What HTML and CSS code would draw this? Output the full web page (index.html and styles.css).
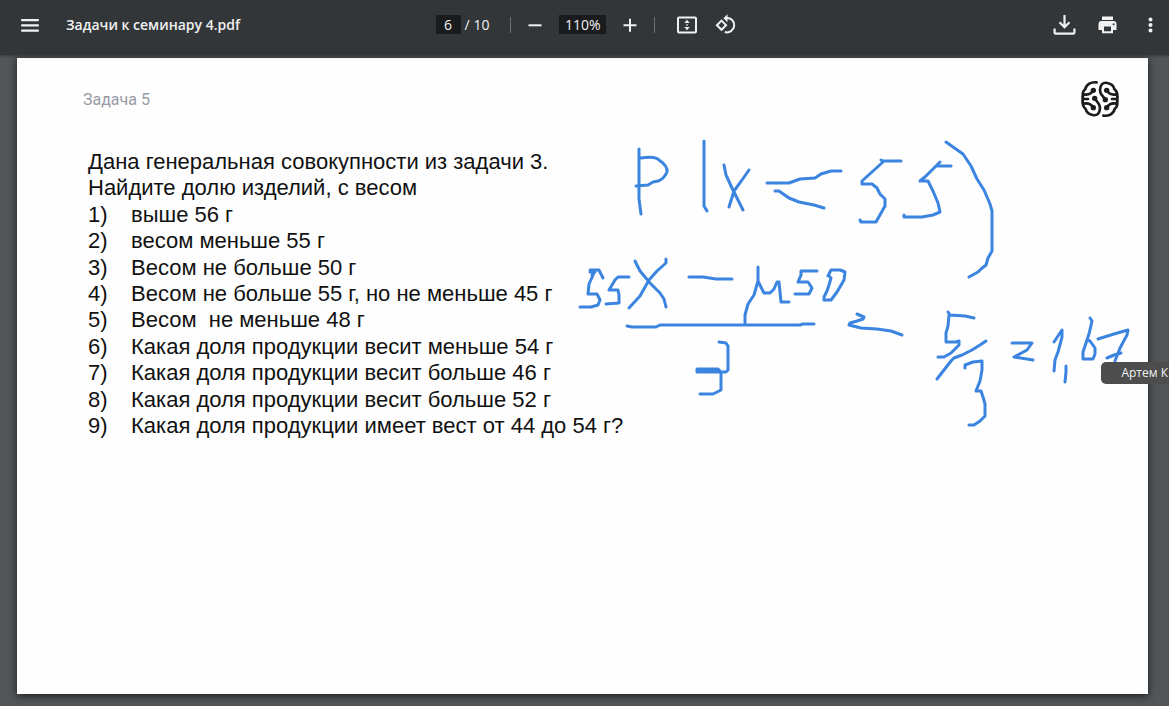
FILE: index.html
```html
<!DOCTYPE html>
<html lang="ru">
<head>
<meta charset="utf-8">
<meta name="viewport" content="width=device-width, initial-scale=1">
<title>Задачи к семинару 4.pdf</title>
<link rel="stylesheet" href="styles.css">
</head>
<body>
<header class="toolbar">
  <div class="toolbar-start">
    <button class="icon-button" type="button" aria-label="Меню">
      <svg viewBox="0 0 24 24" class="icon"><path d="M3.2 6h17.6v2.2H3.2zM3.2 11.2h17.6v2.2H3.2zM3.2 16.6h17.6v2.2H3.2z"/></svg>
    </button>
    <h1 class="file-name">Задачи к семинару 4.pdf</h1>
  </div>
  <div class="toolbar-center">
    <div class="pages">
      <input class="field page-field" type="text" value="6" aria-label="Номер страницы">
      <span class="page-total">/ 10</span>
    </div>
    <span class="divider"></span>
    <div class="zoom">
      <button class="icon-button" type="button" aria-label="Уменьшить">
        <svg viewBox="0 0 24 24" class="icon"><path d="M5.5 11.3h13v2h-13z"/></svg>
      </button>
      <input class="field zoom-field" type="text" value="110%" aria-label="Масштаб">
      <button class="icon-button" type="button" aria-label="Увеличить">
        <svg viewBox="0 0 24 24" class="icon"><path d="M5.500 11.300H11V5.800h2v5.500h5.500v2H13v5.500h-2v-5.500H5.500z"/></svg>
      </button>
    </div>
    <span class="divider"></span>
    <div class="view">
      <button class="icon-button" type="button" aria-label="По размеру страницы">
        <svg viewBox="0 0 24 24" class="icon"><rect x="3" y="4.500" width="18" height="15" rx="1" fill="none" stroke="currentColor" stroke-width="2"/><path d="M12 6.700l2.700 3.300H9.300zM12 17.300l2.700-3.300H9.300zM11.300 11.200h1.400v1.600h-1.400z"/></svg>
      </button>
      <button class="icon-button" type="button" aria-label="Повернуть">
        <svg viewBox="0 0 24 24" class="icon"><g fill="none" stroke="currentColor" stroke-width="2"><path d="M7.500 7.600L12.100 12.200 7.500 16.800 2.900 12.200z"/><path d="M12.300 5A7.200 7.200 0 1 1 10.800 19"/></g><path d="M13.500 1.200v8L9.400 5.200z"/></svg>
      </button>
    </div>
  </div>
  <div class="toolbar-end">
    <button class="icon-button" type="button" aria-label="Скачать">
      <svg viewBox="0 0 24 24" class="icon"><g fill="none" stroke="currentColor" stroke-width="2.200"><path d="M2.600 15.500v4q0 1.200 1.200 1.200h17.400q1.200 0 1.200-1.200v-4M12.500 2v11.500M7.500 9.200l5 5 5-5"/></g></svg>
    </button>
    <button class="icon-button" type="button" aria-label="Печать">
      <svg viewBox="0 0 24 24" class="icon"><path fill-rule="evenodd" d="M7 3.500h11v3.600H7zM6.500 8.100h12q3 0 3 3v6H18v3.200H7v-3.200H3.500v-6q0-3 3-3zM9 13.500v4.800h7v-4.800zM17.700 10.500h1.800v1.800h-1.800z"/></svg>
    </button>
    <button class="icon-button" type="button" aria-label="Ещё">
      <svg viewBox="0 0 24 24" class="icon"><circle cx="12.500" cy="6.500" r="2"/><circle cx="12.500" cy="12" r="2"/><circle cx="12.500" cy="17.500" r="2"/></svg>
    </button>
  </div>
</header>

<main class="viewer">
  <article class="page">
    <header class="page-head">
      <h2 class="page-title">Задача 5</h2>
      <svg class="logo" viewBox="58 27 120 120" role="img" aria-label="Логотип">
        <defs>
          <g id="logo-half">
            <g fill="none" stroke="currentColor" stroke-width="8" stroke-linecap="round" stroke-linejoin="round">
              <path d="M108 37C91 35 77 43 74 57C66 64 65 72 67 80"/>
              <path d="M97 62C91 72 83 76 69 73"/>
              <path d="M66 80V93M66 87H82"/>
              <path d="M103 86C109 98 118 99 118 113C118 130 109 138 96 135C85 133 77 126 75 117C68 111 65 103 66 93"/>
              <path d="M97 112C91 102 83 98 69 101"/>
            </g>
            <circle cx="98" cy="61" r="8"/>
            <circle cx="102" cy="85" r="8"/>
            <circle cx="98" cy="113" r="8"/>
          </g>
        </defs>
        <use href="#logo-half"/>
        <use href="#logo-half" transform="rotate(180 118 87)"/>
      </svg>
    </header>
    <section class="task">
      <p>Дана генеральная совокупности из задачи 3.</p>
      <p>Найдите долю изделий, с весом</p>
      <ol class="items">
        <li>выше 56 г</li>
        <li>весом меньше 55 г</li>
        <li>Весом не больше 50 г</li>
        <li>Весом не больше 55 г, но не меньше 45 г</li>
        <li>Весом&nbsp; не меньше 48 г</li>
        <li>Какая доля продукции весит меньше 54 г</li>
        <li>Какая доля продукции весит больше 46 г</li>
        <li>Какая доля продукции весит больше 52 г</li>
        <li>Какая доля продукции имеет вест от 44 до 54 г?</li>
      </ol>
    </section>
    <svg class="ink" viewBox="17 58 1131 636" preserveAspectRatio="xMinYMin meet" role="img" aria-label="Рукописные заметки">
      <!-- inequality, top row -->
      <path d="M639 149V199L641 214M641 158Q655 156 659 160Q668 166 667 172Q664 179 658 181L653 182L648 185L636 186"/>
      <path d="M704 141V206L707 211"/>
      <path d="M724 165L726 175L732 188L743 210M749 170L742 180L734 191L729 207"/>
      <path d="M767 183H789L800 179L815 178L821 174L831 171H841M775 191H779L789 198L799 202L814 205L824 208"/>
      <path d="M881 160L883 161H901M883 162L862 181V184H872L877 188L880 194L885 199V206L876 222H861L860 220"/>
      <path d="M940 162L936 166H951M936 166L926 176L920 181H928L933 191L938 203L940 212L933 215L922 217H904V215"/>
      <path d="M946 142L963 154L971 166L977 179L984 190L990 204L992 211V251L988 258L986 265L981 269L978 272L969 277"/>
      <!-- fraction -->
      <path d="M590 272H595L592 275M590 270H599L603 278M594 273L589 284L588 294H597L600 300L598 305L591 307H580"/>
      <path d="M629 277H618L615 280L609 290H618L619 295V303L606 304"/>
      <path d="M635 261L640 271L650 283L660 293L664 299L666 307M666 259V263L657 271L649 280L640 296L629 308"/>
      <path d="M689 277H703L716 279H732"/>
      <path d="M758 267V281L754 295L748 304L745 315V323M758 281L764 293H770L774 289L777 282H779L781 302H789"/>
      <path d="M817 271H801V275L798 282H808L812 288L809 294H795"/>
      <path d="M829 276L831 278L829 285L827 291L824 297V300H831L837 292L844 280L845 272L840 270H831L828 276"/>
      <path d="M627 326L632 327H656L660 325H800L803 324H814"/>
      <path d="M719 342L726 343L728 346V370L726 372H697V369H718L721 372V390L713 394H700"/>
      <!-- quotient -->
      <path d="M857 314L864 317L863 319L857 321L850 323L849 325L861 328L877 329L891 331L902 335"/>
      <path d="M974 318L965 316L950 315L948 312M949 315L948 326L946 333V342H956L959 341V345L951 353L944 357H938"/>
      <path d="M986 341L980 345L972 350L962 355L954 358L951 361L937 379"/>
      <path d="M965 368V365L973 362L982 361V370L980 381L976 391H981L983 397L985 404V416L980 421L974 425H969"/>
      <path d="M1012 343H1032L1027 350L1014 357L1033 360"/>
      <path d="M1054 342L1062 330V337L1058 352L1055 360L1054 371M1066 366V372L1065 382"/>
      <path d="M1090 318L1092 321L1089 334L1083 352V359H1093L1095 354V348L1090 341L1087 340"/>
      <path d="M1098 339L1114 334L1128 330L1127 335L1120 348L1115 361M1107 358L1114 355L1121 353"/>
    </svg>
  </article>
  <div class="presence">Артем К</div>
</main>
</body>
</html>
```
FILE: styles.css
```css
* {
  box-sizing: border-box;
}

body {
  display: flex;
  flex-direction: column;
  min-height: 100vh;
  margin: 0;
  background: #525659;
  font-family: "Open Sans", "Noto Sans", sans-serif;
}

h1,
h2,
p,
ol {
  margin: 0;
  padding: 0;
}

.toolbar {
  display: grid;
  grid-template-columns: 1fr auto 1fr;
  align-items: center;
  padding: 0 7px 6px 18px;
  height: 55px;
  background: #323639;
  box-shadow: 0 0 4px #0008;
  color: #f1f1f1;
  z-index: 1;
}

.toolbar-start,
.toolbar-center,
.toolbar-end,
.pages,
.zoom,
.view {
  display: flex;
  align-items: center;
}

.toolbar-start {
  gap: 24px;
}

.toolbar-center {
  gap: 21px;
  margin-right: 6px;
}

.toolbar-end {
  justify-content: flex-end;
  gap: 19px;
}

.pages {
  gap: 4px;
}

.zoom {
  gap: 12px;
  margin: 0 -9px;
}

.view {
  gap: 15px;
  margin-left: -1px;
}

.icon-button {
  display: flex;
  padding: 0;
  border: 0;
  background: none;
  color: inherit;
}

.icon {
  width: 24px;
  height: 24px;
  fill: currentColor;
}

.file-name {
  font-size: 14px;
  font-weight: 600;
  white-space: nowrap;
}

.field {
  height: 19px;
  padding: 0;
  border: 0;
  background: #191b1c;
  color: inherit;
  font-family: inherit;
  font-size: 14px;
  text-align: center;
}

.page-field {
  width: 25px;
}

.zoom-field {
  width: 47px;
}

.page-total {
  font-size: 14px;
  white-space: nowrap;
}

.divider {
  width: 1px;
  height: 16px;
  background: #6d7073;
}

.viewer {
  position: relative;
  display: flex;
  flex: 1;
  padding: 3px 21px 12px 17px;
}

.page {
  position: relative;
  flex: 1;
  padding: 21px 28px 20px 66px;
  background: #fefefe;
  box-shadow: 0 2px 8px #000a;
}

.page-head {
  display: flex;
  align-items: center;
  justify-content: space-between;
}

.page-title {
  color: #9a9aa5;
  font-family: Roboto, sans-serif;
  font-size: 16px;
  font-weight: 400;
}

.logo {
  width: 40px;
  height: 40px;
  color: #1c1b1d;
  fill: currentColor;
}

.task {
  padding: 30px 0 0 5px;
  color: #111;
  font-family: "Liberation Sans", Arial, sans-serif;
  font-size: 22px;
  line-height: 1.2;
}

.items {
  list-style: none;
  counter-reset: item;
}

.items li {
  display: grid;
  grid-template-columns: 43px 1fr;
  counter-increment: item;
}

.items li::before {
  content: counter(item) ")";
}

.ink {
  position: absolute;
  inset: 0;
  width: 100%;
  height: 100%;
  fill: none;
  stroke: #3b84e0;
  stroke-width: 3;
  stroke-linecap: round;
  stroke-linejoin: round;
  pointer-events: none;
}

.presence {
  position: absolute;
  top: 307px;
  right: 0;
  padding: 0 1px 0 20px;
  border-radius: 5px 0 0 5px;
  background: #4d4d4d;
  color: #f1f1f1;
  font-size: 12px;
  line-height: 22px;
}
```
